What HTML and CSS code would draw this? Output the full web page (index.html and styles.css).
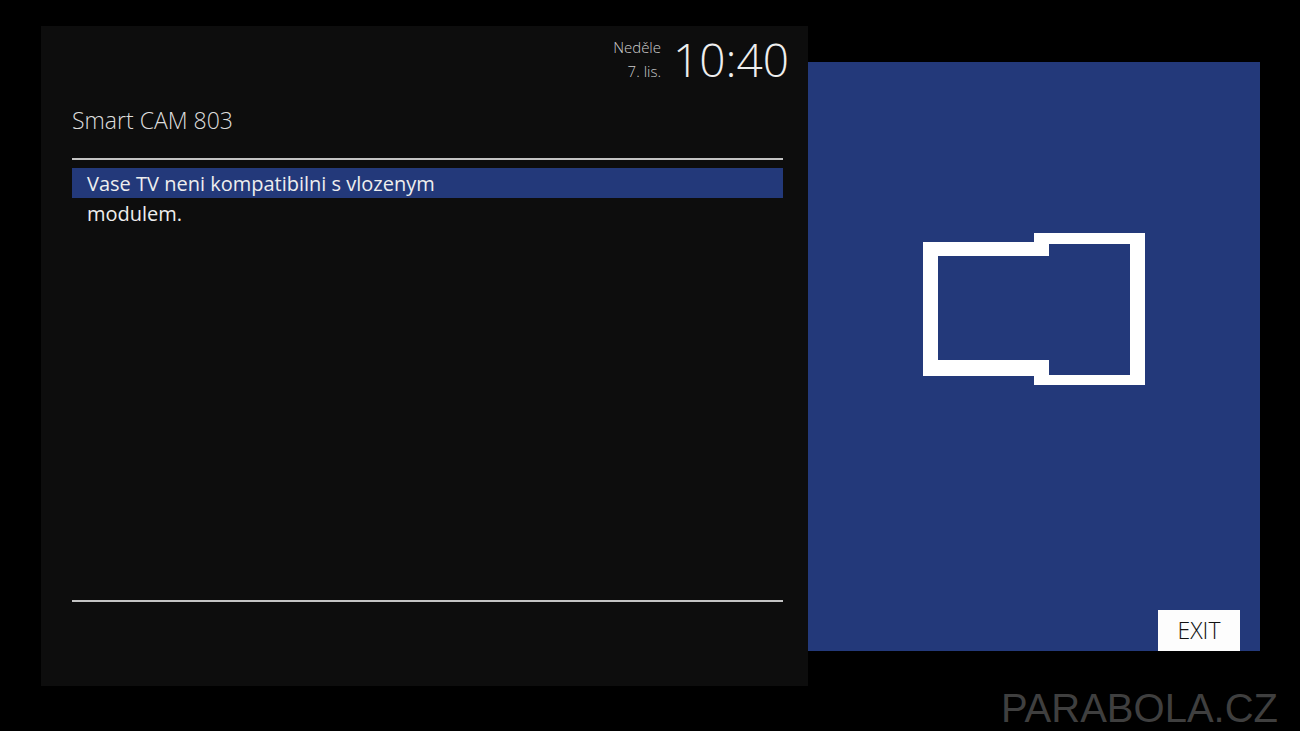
FILE: index.html
```html
<!DOCTYPE html>
<html lang="cs">
<head>
<meta charset="utf-8">
<meta name="viewport" content="width=device-width, initial-scale=1">
<title>Smart CAM 803</title>
<link rel="stylesheet" href="styles.css">
</head>
<body>
<div class="screen">
  <main class="menu">
    <div class="clock">
      <div class="date"><span>Neděle</span><span>7. lis.</span></div>
      <time class="time">10:40</time>
    </div>
    <h1 class="title">Smart CAM 803</h1>
    <ul class="list">
      <li class="row selected">Vase TV neni kompatibilni s vlozenym</li>
      <li class="row">modulem.</li>
    </ul>
  </main>
  <aside class="side">
    <svg class="module" viewBox="0 0 222 152" aria-hidden="true">
      <path fill="#fff" fill-rule="evenodd" d="M0 9H111V0H222V152H111V143H0ZM15 23V127H126V142H207V11H126V23Z"/>
    </svg>
    <button class="exit" type="button">EXIT</button>
  </aside>
</div>
<div class="brand">PARABOLA.CZ</div>
</body>
</html>
```
FILE: styles.css
```css
* {
  box-sizing: border-box;
}

body {
  margin: 0;
  min-height: 100vh;
  display: flex;
  flex-direction: column;
  background: #000;
  color: #eee;
  font-family: "Open Sans", "Noto Sans", sans-serif;
}

.screen {
  flex: 1;
  display: grid;
  grid-template-columns: 767fr 452fr;
  padding: 26px 40px 0 41px;
}

.menu {
  display: flex;
  flex-direction: column;
  padding: 0 25px 84px 31px;
  background: #0d0d0d;
}

.clock {
  display: flex;
  justify-content: flex-end;
  gap: 12px;
  height: 72px;
  margin-right: -6px;
}

.date {
  display: flex;
  flex-direction: column;
  padding-top: 9px;
  color: #ccc;
  font-size: 15px;
  font-weight: 300;
  line-height: 24px;
  text-align: right;
}

.time {
  font-size: 46px;
  font-weight: 300;
  line-height: 66px;
}

.title {
  margin: 0;
  height: 62px;
  padding-top: 6px;
  border-bottom: 2px solid #c4c4c4;
  color: #ddd;
  font-size: 23px;
  font-weight: 300;
  line-height: 32px;
}

.list {
  flex: 1;
  margin: 0;
  padding: 8px 0 0;
  border-bottom: 2px solid #c4c4c4;
  list-style: none;
}

.row {
  padding: 2px 15px 0;
  font-size: 20px;
  line-height: 28px;
}

.selected {
  background: #23397a;
}

.side {
  display: flex;
  flex-direction: column;
  align-items: center;
  justify-content: space-between;
  margin: 36px 0 35px;
  padding-top: 171px;
  background: #23397a;
}

.module {
  width: 222px;
  height: 152px;
}

.exit {
  align-self: flex-end;
  width: 82px;
  height: 41px;
  margin-right: 20px;
  padding: 0;
  border: 0;
  background: #fdfdfd;
  color: #111;
  font: 300 23px/41px "Open Sans", sans-serif;
}

.brand {
  padding-right: 22px;
  color: #3f3f3f;
  font: 40px/45px "Liberation Sans", Arial, sans-serif;
  text-align: right;
}
```
